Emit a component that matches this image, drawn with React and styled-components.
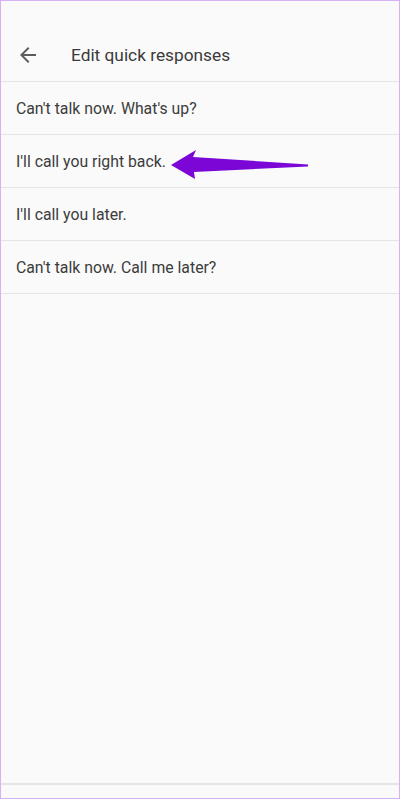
import React from 'react';
import styled, { createGlobalStyle } from 'styled-components';

const GlobalStyle = createGlobalStyle`
    html, body {
        margin: 0;
        padding: 0;
        background: #fafafa;
    }
    * {
        box-sizing: border-box;
    }
`;

const Frame = styled.div`
    position: relative;
    width: 400px;
    height: 799px;
    border: 1px solid #d6b2f2;
    background: #fafafa;
    display: flex;
    flex-direction: column;
    font-family: Roboto, "Liberation Sans", sans-serif;
    overflow: hidden;
`;

const Header = styled.header`
    height: 81px;
    padding: 28px 0 0 15px;
    display: flex;
    align-items: center;
    border-bottom: 1px solid #e4e4e4;
    flex-shrink: 0;
`;

const BackButton = styled.button`
    width: 24px;
    height: 24px;
    padding: 0;
    border: none;
    background: none;
    display: flex;
    align-items: center;
    justify-content: center;
    color: #5c5c5c;
    margin-right: 31px;
`;

const Title = styled.h1`
    margin: 0;
    font-size: 17.3px;
    font-weight: 400;
    color: #3a3a3a;
`;

const List = styled.ul`
    list-style: none;
    margin: 0;
    padding: 0;
`;

const Row = styled.li`
    height: 53px;
    padding-left: 15px;
    display: flex;
    align-items: center;
    border-bottom: 1px solid #e4e4e4;
    font-size: 15.8px;
    color: #3c3c3c;
`;

const Spacer = styled.div`
    flex: 1;
`;

const BottomBar = styled.div`
    height: 15px;
    border-top: 2px solid #e4e4e4;
    flex-shrink: 0;
`;

const Pointer = styled.svg`
    position: absolute;
    left: 164px;
    top: 144px;
`;

const responses = [
    "Can't talk now. What's up?",
    "I'll call you right back.",
    "I'll call you later.",
    "Can't talk now. Call me later?",
];

const App = () => (
    <>
        <GlobalStyle />
        <Frame>
            <Header>
                <BackButton aria-label="Back">
                    <svg width="24" height="24" viewBox="0 0 24 24" fill="currentColor">
                        <path d="M20 11H7.83l5.59-5.59L12 4l-8 8 8 8 1.41-1.41L7.83 13H20v-2z" />
                    </svg>
                </BackButton>
                <Title>Edit quick responses</Title>
            </Header>
            <List>
                {responses.map(text => (
                    <Row key={text}>{text}</Row>
                ))}
            </List>
            <Spacer />
            <BottomBar />
            <Pointer width="146" height="38" viewBox="0 0 146 38">
                <polygon
                    points="6,20 31,5 28,12 143,19.5 143,21.5 29,27 30,34"
                    fill="#7b06d6"
                />
            </Pointer>
        </Frame>
    </>
);

export default App;
